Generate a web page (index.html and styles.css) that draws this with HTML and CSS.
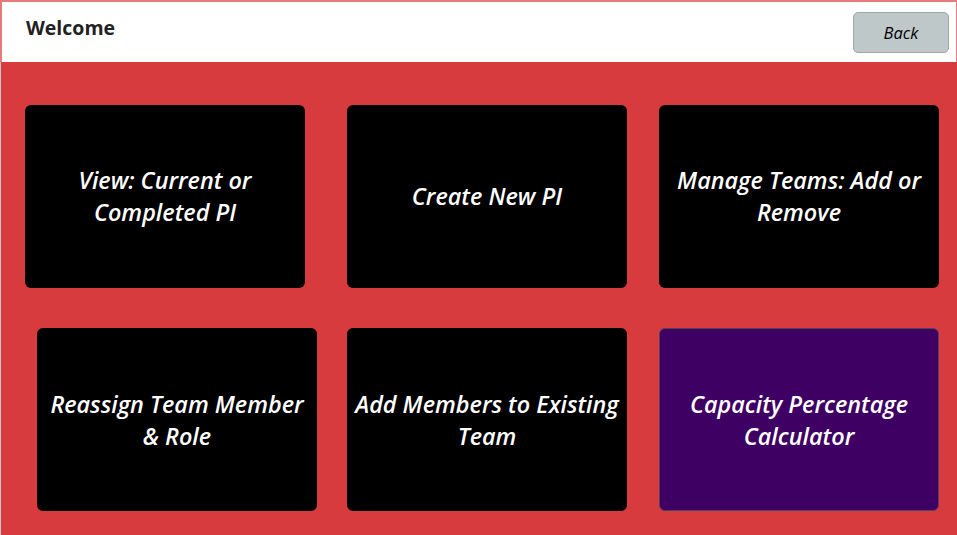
FILE: index.html
```html
<!DOCTYPE html>
<html>
<head>
<meta charset="utf-8">
<link rel="stylesheet" href="styles.css">
</head>
<body>
<div class="screen">
  <header class="header">
    <h1 class="title">Welcome</h1>
    <button class="back">Back</button>
  </header>
  <main class="board">
    <div class="row row-1">
      <div class="tile t1">View: Current or<br>Completed PI</div>
      <div class="tile t2">Create New PI</div>
      <div class="tile t3">Manage Teams: Add or<br>Remove</div>
    </div>
    <div class="row row-2">
      <div class="tile t4">Reassign Team Member<br>&amp; Role</div>
      <div class="tile t5">Add Members to Existing<br>Team</div>
      <div class="tile t6 purple">Capacity Percentage<br>Calculator</div>
    </div>
  </main>
</div>
</body>
</html>
```

FILE: styles.css
```css
html, body {
  margin: 0;
  padding: 0;
  width: 957px;
  height: 535px;
  overflow: hidden;
  font-family: "Open Sans", "Noto Sans", sans-serif;
}

.screen {
  width: 957px;
  height: 535px;
  display: flex;
  flex-direction: column;
  background: #d73b3e;
}

.header {
  height: 60px;
  background: #ffffff;
  border-top: 2px solid #e87a7c;
  border-left: 2px solid #e87a7c;
  border-right: 1px solid #e87a7c;
  display: flex;
  align-items: flex-start;
  justify-content: space-between;
  box-sizing: content-box;
}

.title {
  margin: 13px 0 0 24px;
  font-size: 19.5px;
  font-weight: 700;
  color: #222222;
  line-height: 26px;
}

.back {
  margin: 10px 7px 0 0;
  width: 96px;
  height: 41px;
  background: #bec8c9;
  border: 1px solid #9ea8a9;
  border-radius: 5px;
  font-family: "Open Sans", sans-serif;
  font-style: italic;
  font-weight: 500;
  font-size: 16.5px;
  color: #000000;
  padding: 0;
}

.board {
  flex: 1;
  border-left: 1px solid #c9c9c9;
  padding-top: 43px;
  display: flex;
  flex-direction: column;
  gap: 40px;
}

.row {
  display: flex;
}

.tile {
  width: 280px;
  height: 183px;
  box-sizing: border-box;
  background: #000000;
  border-radius: 6px;
  color: #ffffff;
  font-style: italic;
  font-weight: 600;
  font-size: 23.4px;
  line-height: 32px;
  display: flex;
  align-items: center;
  justify-content: center;
  text-align: center;
  padding-bottom: 2px;
}

.t1 { margin-left: 24px; }
.t2 { margin-left: 42px; }
.t3 { margin-left: 32px; }
.t4 { margin-left: 36px; padding-bottom: 0; }
.t5 { margin-left: 30px; padding-bottom: 0; }
.t6 { margin-left: 32px; padding-bottom: 0; }

.purple {
  background: #3e0063;
  border: 1px solid #55405e;
}
```
